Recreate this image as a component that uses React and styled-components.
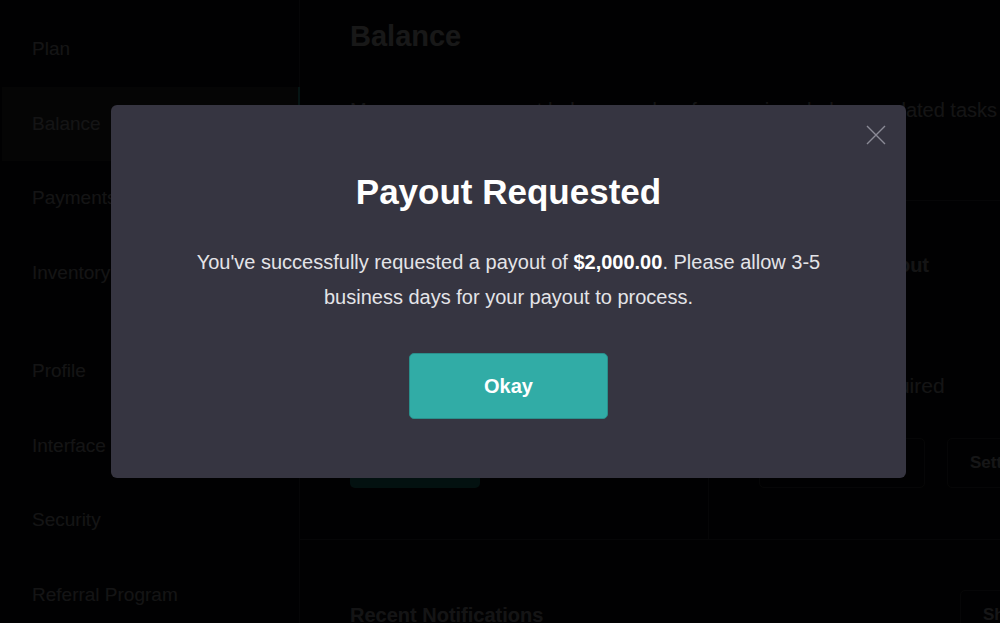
import React from "react";
import styled, { createGlobalStyle } from "styled-components";

const GlobalStyle = createGlobalStyle`
  html, body {
    margin: 0;
    padding: 0;
    background: #0e0e10;
    overflow: hidden;
  }
  body {
    font-family: "Liberation Sans", Arial, Helvetica, sans-serif;
  }
`;

const navTop = ["Plan", "Balance", "Payments", "Inventory"];
const navBottom = ["Profile", "Interface", "Security", "Referral Program"];

export default function App() {
  return (
    <>
      <GlobalStyle />
      <Page>
        <Sidebar>
          <NavGroup>
            {navTop.map((item) => (
              <NavItem key={item} $active={item === "Balance"}>
                {item}
              </NavItem>
            ))}
          </NavGroup>
          <NavGroup>
            {navBottom.map((item) => (
              <NavItem key={item}>{item}</NavItem>
            ))}
          </NavGroup>
        </Sidebar>

        <Main>
          <Header>
            <Title>Balance</Title>
            <Description>
              Manage your account balance and perform various balance-related tasks conveniently.
            </Description>
          </Header>

          <Cards>
            <Card>
              <CardTitle>Available Balance</CardTitle>
              <Amount>$2,000.00</Amount>
              <CardText>Ready for payout</CardText>
              <ButtonRow>
                <PrimaryButton>Withdraw</PrimaryButton>
              </ButtonRow>
            </Card>
            <Card>
              <CardTitle>Automatic Payout</CardTitle>
              <Amount>Disabled</Amount>
              <CardText>Verification required</CardText>
              <ButtonRow>
                <OutlineButton $width="166px">Enable</OutlineButton>
                <OutlineButton $width="140px">Settings</OutlineButton>
              </ButtonRow>
            </Card>
          </Cards>

          <Section>
            <SectionTitle>Recent Notifications</SectionTitle>
            <OutlineButton $width="120px">Show all</OutlineButton>
          </Section>
        </Main>
      </Page>

      <Overlay>
        <Modal>
          <CloseButton aria-label="Close">
            <svg width="20" height="20" viewBox="0 0 20 20" fill="none">
              <path d="M1 1L19 19M19 1L1 19" stroke="#8b8a96" strokeWidth="1.4" />
            </svg>
          </CloseButton>
          <ModalTitle>Payout Requested</ModalTitle>
          <ModalText>
            You've successfully requested a payout of <strong>$2,000.00</strong>. Please allow 3-5
            business days for your payout to process.
          </ModalText>
          <OkayButton>Okay</OkayButton>
        </Modal>
      </Overlay>
    </>
  );
}

const Page = styled.div`
  display: flex;
  width: 1000px;
  height: 623px;
  overflow: hidden;
  color: #a6a6aa;
`;

const Sidebar = styled.nav`
  width: 300px;
  flex-shrink: 0;
  display: flex;
  flex-direction: column;
  gap: 24px;
  padding-top: 12px;
  border-right: 1px solid #36363a;
  box-sizing: border-box;
`;

const NavGroup = styled.div`
  display: flex;
  flex-direction: column;
`;

const NavItem = styled.div`
  height: 74.5px;
  display: flex;
  align-items: center;
  padding-left: 30px;
  margin-left: 2px;
  margin-right: -1px;
  font-size: 19px;
  background: ${(p) => (p.$active ? "#2a2a2e" : "transparent")};
  border-right: 2px solid ${(p) => (p.$active ? "#31aca6" : "transparent")};
`;

const Main = styled.main`
  flex: 1;
  display: flex;
  flex-direction: column;
  min-width: 0;
  overflow: hidden;
  & > * {
    flex-shrink: 0;
  }
`;

const Header = styled.div`
  padding: 20px 0 0 50px;
  height: 200px;
  box-sizing: border-box;
`;

const Title = styled.h1`
  margin: 0;
  font-size: 29px;
  font-weight: 700;
  color: #c2c2c6;
`;

const Description = styled.p`
  margin: 46px 0 0;
  font-size: 20px;
  white-space: nowrap;
`;

const Cards = styled.div`
  display: grid;
  grid-template-columns: 408px 1fr;
  border-top: 1px solid #36363a;
  border-bottom: 1px solid #36363a;
  height: 340px;
  box-sizing: border-box;
`;

const Card = styled.div`
  padding: 53px 0 0 50px;
  display: flex;
  flex-direction: column;
  & + & {
    border-left: 1px solid #36363a;
  }
`;

const CardTitle = styled.h2`
  margin: 0;
  font-size: 20px;
  font-weight: 700;
  white-space: nowrap;
`;

const Amount = styled.div`
  margin-top: 30px;
  font-size: 28px;
  font-weight: 700;
`;

const CardText = styled.div`
  margin-top: 35px;
  font-size: 21px;
  white-space: nowrap;
`;

const ButtonRow = styled.div`
  display: flex;
  gap: 22px;
  margin-top: 40px;
`;

const PrimaryButton = styled.button`
  width: 130px;
  height: 50px;
  border: none;
  border-radius: 5px;
  background: #1c8a84;
  color: #fff;
  white-space: nowrap;
  font: 700 16px "Liberation Sans", Arial, sans-serif;
`;

const OutlineButton = styled.button`
  width: ${(p) => p.$width};
  flex-shrink: 0;
  height: 50px;
  border: 1px solid #36363c;
  border-radius: 5px;
  background: transparent;
  color: #b4b4b8;
  font: 700 17px "Liberation Sans", Arial, sans-serif;
  text-align: left;
  padding-left: 22px;
`;

const Section = styled.div`
  display: flex;
  justify-content: space-between;
  align-items: center;
  padding: 50px 0 0 50px;
  gap: 20px;
  margin-right: -80px;
`;

const SectionTitle = styled.h2`
  margin: 0;
  font-size: 20px;
  font-weight: 700;
`;

const Overlay = styled.div`
  position: fixed;
  inset: 0;
  background: rgba(0, 0, 0, 0.88);
  display: flex;
  align-items: flex-start;
  padding: 105px 0 0 111px;
`;

const Modal = styled.div`
  position: relative;
  width: 795px;
  height: 373px;
  box-sizing: border-box;
  background: #363541;
  border-radius: 6px;
  display: flex;
  flex-direction: column;
  align-items: center;
  padding-top: 67px;
`;

const CloseButton = styled.button`
  position: absolute;
  top: 20px;
  right: 20px;
  padding: 0;
  border: none;
  background: none;
  line-height: 0;
`;

const ModalTitle = styled.h2`
  margin: 0;
  font-size: 35px;
  line-height: 40px;
  font-weight: 700;
  color: #fff;
`;

const ModalText = styled.p`
  margin: 33px 0 0;
  max-width: 660px;
  text-align: center;
  font-size: 20px;
  line-height: 35px;
  color: #e4e4e8;
  strong {
    color: #fff;
  }
`;

const OkayButton = styled.button`
  margin-top: 38px;
  width: 199px;
  height: 66px;
  border: 1px solid #2a8f8b;
  border-radius: 5px;
  background: #31aca6;
  color: #fff;
  font: 700 20px "Liberation Sans", Arial, sans-serif;
`;
